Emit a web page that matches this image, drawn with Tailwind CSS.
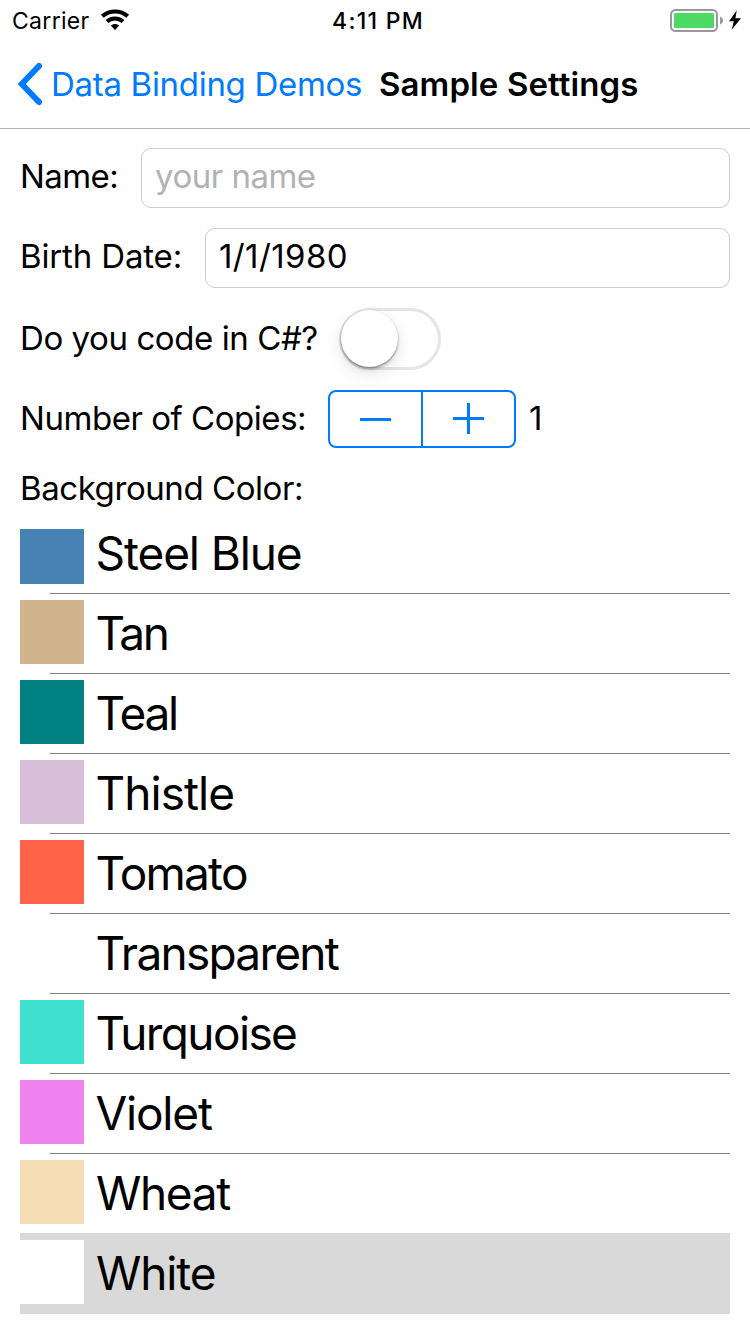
<!DOCTYPE html>
<html lang="en">
<head>
<meta charset="utf-8">
<title>Sample Settings</title>
<script src="https://cdn.jsdelivr.net/npm/@tailwindcss/browser@4"></script>
</head>
<body class="bg-white">
<div class="w-[750px] h-[1334px] overflow-hidden bg-white text-black text-[33px] font-['Inter','Liberation_Sans',sans-serif] whitespace-nowrap">
  <header class="h-[129px] border-b border-[#b2b2b2]">
    <div class="h-10 grid grid-cols-3 text-[23px] leading-[42px]">
      <div class="flex pl-[12px]">
        <span class="w-[88px] tracking-[0.3px]">Carrier</span>
        <svg class="mt-[9px]" width="30" height="22" viewBox="0 0 30 22" fill="none" stroke="#000">
          <path d="M2.300 7.300C9.500 .9 20.500 .9 27.700 7.300" stroke-width="4.200"/>
          <path d="M7 12.400C11.700 8.400 18.300 8.400 23 12.400" stroke-width="4"/>
          <path d="M10.800 16.600C13.200 14.400 16.800 14.400 19.200 16.600L15 20.900Z" fill="#000" stroke="none"/>
        </svg>
      </div>
      <div class="pl-[82px] font-medium tracking-[1.3px]">4:11 PM</div>
      <div class="flex justify-end pt-[9px] pr-[9px]">
        <svg width="71" height="24" viewBox="0 0 71 24">
          <rect x="1" y="1" width="46" height="21" rx="4.500" fill="none" stroke="#999" stroke-width="2"/>
          <rect x="4" y="4" width="40" height="15" rx="1.500" fill="#4cd964"/>
          <path d="M50 7.500C54 9 54 14 50 15.500Z" fill="#999"/>
          <path d="M66.800 1.200L59 12.200H63.800L61.700 20.700L71 9.200H65.400Z" fill="#000"/>
        </svg>
      </div>
    </div>
    <div class="flex h-[88px] leading-[88px]">
      <svg class="ml-[16px] mt-[22px] shrink-0" width="28" height="44" viewBox="0 0 28 44" fill="none" stroke="#007aff" stroke-width="6" stroke-linecap="round" stroke-linejoin="miter"><path d="M23 4L5.800 22L23 40"/></svg>
      <span class="ml-[7px] w-[328px] text-[#007aff] tracking-[-0.300px]">Data Binding Demos</span>
      <span class="font-semibold tracking-[0.1px]">Sample Settings</span>
    </div>
  </header>

  <main class="px-5">
    <div class="mt-[19px] h-[60px] flex leading-[56px]">
      <span class="w-[121px] tracking-[-0.6px]">Name:</span>
      <div class="flex-1 border border-[#ccc] rounded-[10px] pl-[13px] leading-[54px] text-[#b2b2b2] tracking-[-0.5px]">your name</div>
    </div>
    <div class="mt-5 h-[60px] flex leading-[56px]">
      <span class="w-[185px] tracking-[-0.15px]">Birth Date:</span>
      <div class="flex-1 border border-[#ccc] rounded-[10px] pl-[13px] leading-[54px] tracking-[0.4px]">1/1/1980</div>
    </div>
    <div class="mt-5 h-[62px] flex leading-[60px]">
      <span class="w-[319px] tracking-[-0.42px]">Do you code in C#?</span>
      <div class="w-[102px] h-[62px] rounded-full border-[3px] border-[#e5e5e5]">
        <div class="-ml-px -mt-px size-[57px] rounded-full bg-white shadow-[0_6px_16px_rgba(0,0,0,0.12),0_3px_3px_rgba(0,0,0,0.14),0_1px_2px_rgba(0,0,0,0.35)]"></div>
      </div>
    </div>
    <div class="mt-5 h-[58px] flex leading-[56px]">
      <span class="w-[308px] tracking-[-0.46px]">Number of Copies:</span>
      <svg width="188" height="58" viewBox="0 0 188 58" fill="none" stroke="#007aff">
        <rect x="1" y="1" width="186" height="56" rx="7" stroke-width="2"/>
        <path d="M94 1V57" stroke-width="2"/>
        <path d="M32 29.500H63M125 28.500H156M140.500 13V44" stroke-width="3"/>
      </svg>
      <span class="ml-[13px]">1</span>
    </div>
    <div class="mt-3 h-[69px] leading-[56px] tracking-[-0.43px]">Background Color:</div>

    <div class="h-[785px] text-[46px] leading-[79px]">
      <div class="h-[65px] flex flex-col"><div class="h-16 flex"><div class="h-[55px] w-16 bg-[#4682b4]"></div><span class="ml-[11.5px] leading-[49px] tracking-[-1.1px]">Steel Blue</span></div><div class="h-px ml-[30px] bg-[#808080]"></div></div>
      <div class="h-20 flex flex-col"><div class="h-[79px] flex"><div class="mt-[6px] size-16 bg-[#d2b48c]"></div><span class="ml-[11.5px] tracking-[-2.500px]">Tan</span></div><div class="h-px ml-[30px] bg-[#808080]"></div></div>
      <div class="h-20 flex flex-col"><div class="h-[79px] flex"><div class="mt-[6px] size-16 bg-[#008080]"></div><span class="ml-[11.5px] tracking-[-2.2px]">Teal</span></div><div class="h-px ml-[30px] bg-[#808080]"></div></div>
      <div class="h-20 flex flex-col"><div class="h-[79px] flex"><div class="mt-[6px] size-16 bg-[#d8bfd8]"></div><span class="ml-[11.5px] tracking-[-0.95px]">Thistle</span></div><div class="h-px ml-[30px] bg-[#808080]"></div></div>
      <div class="h-20 flex flex-col"><div class="h-[79px] flex"><div class="mt-[6px] size-16 bg-[#ff6347]"></div><span class="ml-[11.5px] tracking-[-1.8px]">Tomato</span></div><div class="h-px ml-[30px] bg-[#808080]"></div></div>
      <div class="h-20 flex flex-col"><div class="h-[79px] flex"><div class="mt-[6px] size-16"></div><span class="ml-[11.5px] tracking-[-1.75px]">Transparent</span></div><div class="h-px ml-[30px] bg-[#808080]"></div></div>
      <div class="h-20 flex flex-col"><div class="h-[79px] flex"><div class="mt-[6px] size-16 bg-[#40e0d0]"></div><span class="ml-[11.5px] tracking-[-1.6px]">Turquoise</span></div><div class="h-px ml-[30px] bg-[#808080]"></div></div>
      <div class="h-20 flex flex-col"><div class="h-[79px] flex"><div class="mt-[6px] size-16 bg-[#ee82ee]"></div><span class="ml-[11.5px] tracking-[-1.200px]">Violet</span></div><div class="h-px ml-[30px] bg-[#808080]"></div></div>
      <div class="h-[79px] flex"><div class="mt-[6px] size-16 bg-[#f5deb3]"></div><span class="ml-3 tracking-[-1.35px]">Wheat</span></div>
      <div class="h-[81px] pt-px flex bg-[#d9d9d9]"><div class="mt-[6px] size-16 bg-white"></div><span class="ml-3 tracking-[-1.1px]">White</span></div>
    </div>
  </main>
</div>
</body>
</html>
